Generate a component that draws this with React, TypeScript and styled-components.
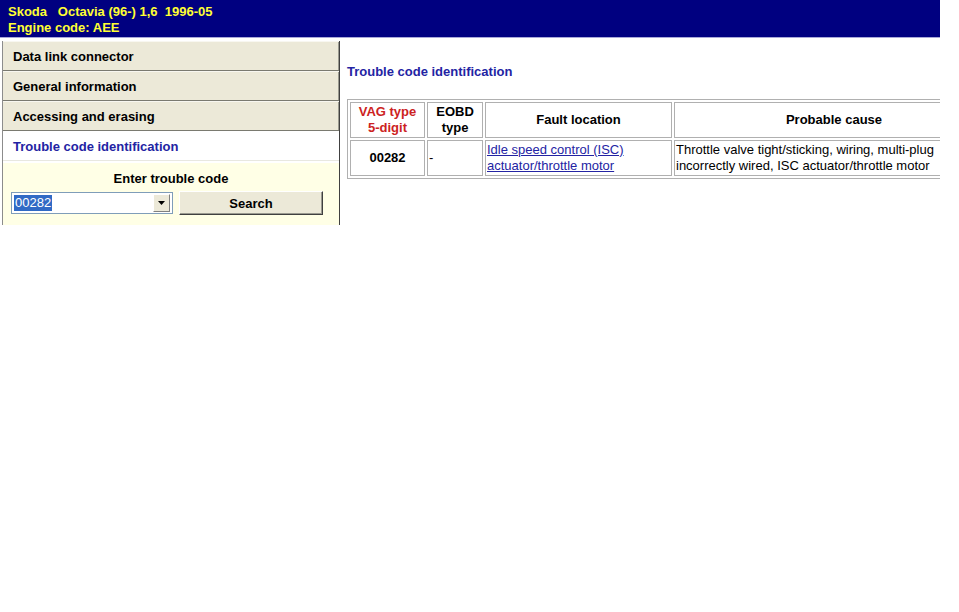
import styled, { createGlobalStyle } from "styled-components";

const GlobalStyle = createGlobalStyle`
  html, body {
    margin: 0;
    padding: 0;
    background: #ffffff;
  }

  body {
    font-family: "Liberation Sans", Arial, sans-serif;
    font-size: 13px;
    color: #000000;
  }
`;

const Page = styled.div`
  width: 940px;
  overflow: hidden;
`;

const TitleBar = styled.div`
  height: 33px;
  padding: 4px 0 0 8px;
  background: #000080;
  border-bottom: 1px solid #a8a8d8;

  color: #ffff33;
  font-size: 13px;
  font-weight: bold;
  line-height: 16px;
`;

const TitleLine = styled.div`
  white-space: pre;
`;

const Body = styled.div`
  display: flex;
  margin-top: 3px;
`;

const Sidebar = styled.div`
  width: 336px;
  margin-left: 2px;
  flex-shrink: 0;
  border-left: 1px solid #8c8c8c;
  border-right: 1px solid #404040;
`;

const MenuItem = styled.div<{ $active?: boolean }>`
  height: 28px;
  padding-left: 10px;

  display: flex;
  align-items: center;

  background: ${(p) => (p.$active ? "#ffffff" : "#ece9d8")};
  border-top: 1px solid ${(p) => (p.$active ? "#ffffff" : "#f8f7f0")};
  border-bottom: 1px solid ${(p) => (p.$active ? "#e8e8e0" : "#7a7a70")};
  box-shadow: ${(p) => (p.$active ? "none" : "inset -1px 0 0 #9a9a90")};

  color: ${(p) => (p.$active ? "#2323a3" : "#000000")};
  font-weight: bold;
  font-size: 13px;
`;

const SearchPanel = styled.div`
  margin-top: 2px;
  height: 55px;
  padding-top: 7px;
  background: #ffffe6;

  display: flex;
  flex-direction: column;
  align-items: center;
`;

const SearchLabel = styled.div`
  font-weight: bold;
  font-size: 13px;
  height: 17px;
  line-height: 17px;
`;

const SearchRow = styled.div`
  display: flex;
  gap: 6px;
  margin-top: 5px;
  align-self: flex-start;
  margin-left: 8px;
`;

const ComboBox = styled.div`
  width: 160px;
  height: 20px;
  background: #ffffff;
  border: 1px solid #7f9db9;

  display: flex;
  align-items: center;
  justify-content: space-between;
`;

const ComboValue = styled.span`
  margin-left: 2px;
  padding: 0 1px;
  background: #316ac5;
  color: #ffffff;
  font-size: 13px;
  line-height: 16px;
`;

const ComboArrow = styled.div`
  width: 15px;
  height: 16px;
  margin-right: 2px;
  background: #ece9d8;
  border: 1px solid;
  border-color: #ffffff #808080 #808080 #ffffff;

  display: flex;
  align-items: center;
  justify-content: center;
`;

const SearchButton = styled.button`
  width: 144px;
  height: 24px;
  margin-top: -1px;
  padding: 0;
  background: #ece9d8;
  border: 1px solid;
  border-color: #ffffff #404040 #404040 #ffffff;
  box-shadow: inset -1px -1px 0 #9a9a90;

  font-family: "Liberation Sans", Arial, sans-serif;
  font-weight: bold;
  font-size: 13px;
  color: #000000;
`;

const Content = styled.div`
  padding-left: 7px;
  flex: 1;
  min-width: 0;
`;

const ContentTitle = styled.h2`
  margin: 23px 0 19px;
  font-size: 13px;
  font-weight: bold;
  line-height: 16px;
  color: #2323a3;
`;

const CodeTable = styled.table`
  border: 1px solid #b0b0b0;
  border-spacing: 2px;
  width: 620px;
  table-layout: fixed;
`;

const HeadCell = styled.th<{ $red?: boolean }>`
  border: 1px solid #b0b0b0;
  height: 34px;
  padding: 0 2px;
  font-size: 13px;
  font-weight: bold;
  line-height: 16px;
  color: ${(p) => (p.$red ? "#cc2222" : "#000000")};
`;

const Cell = styled.td<{ $center?: boolean; $bold?: boolean }>`
  border: 1px solid #b0b0b0;
  height: 34px;
  padding: 0 1px;
  line-height: 16px;
  font-size: 13px;
  text-align: ${(p) => (p.$center ? "center" : "left")};
  font-weight: ${(p) => (p.$bold ? "bold" : "normal")};
  white-space: nowrap;
  overflow: hidden;
`;

const FaultLink = styled.a`
  color: #2323a3;
  text-decoration: underline;
`;

const menu = ["Data link connector", "General information", "Accessing and erasing"];

export default function App() {
  return (
    <>
      <GlobalStyle />
      <Page>
        <TitleBar>
          <TitleLine>Skoda   Octavia (96-) 1,6  1996-05</TitleLine>
          <TitleLine>Engine code: AEE</TitleLine>
        </TitleBar>
        <Body>
          <Sidebar>
            {menu.map((item) => (
              <MenuItem key={item}>{item}</MenuItem>
            ))}
            <MenuItem $active>Trouble code identification</MenuItem>
            <SearchPanel>
              <SearchLabel>Enter trouble code</SearchLabel>
              <SearchRow>
                <ComboBox>
                  <ComboValue>00282</ComboValue>
                  <ComboArrow>
                    <svg width="7" height="4" viewBox="0 0 7 4">
                      <path d="M0 0h7L3.5 4z" fill="#000" />
                    </svg>
                  </ComboArrow>
                </ComboBox>
                <SearchButton>Search</SearchButton>
              </SearchRow>
            </SearchPanel>
          </Sidebar>
          <Content>
            <ContentTitle>Trouble code identification</ContentTitle>
            <CodeTable>
              <colgroup>
                <col style={{ width: 75 }} />
                <col style={{ width: 56 }} />
                <col style={{ width: 187 }} />
                <col style={{ width: 320 }} />
              </colgroup>
              <thead>
                <tr>
                  <HeadCell $red>
                    VAG type
                    <br />
                    5-digit
                  </HeadCell>
                  <HeadCell>
                    EOBD
                    <br />
                    type
                  </HeadCell>
                  <HeadCell>Fault location</HeadCell>
                  <HeadCell>Probable cause</HeadCell>
                </tr>
              </thead>
              <tbody>
                <tr>
                  <Cell $center $bold>
                    00282
                  </Cell>
                  <Cell>-</Cell>
                  <Cell>
                    <FaultLink href="#">
                      Idle speed control (ISC)
                      <br />
                      actuator/throttle motor
                    </FaultLink>
                  </Cell>
                  <Cell>
                    Throttle valve tight/sticking, wiring, multi-plug
                    <br />
                    incorrectly wired, ISC actuator/throttle motor
                  </Cell>
                </tr>
              </tbody>
            </CodeTable>
          </Content>
        </Body>
      </Page>
    </>
  );
}
